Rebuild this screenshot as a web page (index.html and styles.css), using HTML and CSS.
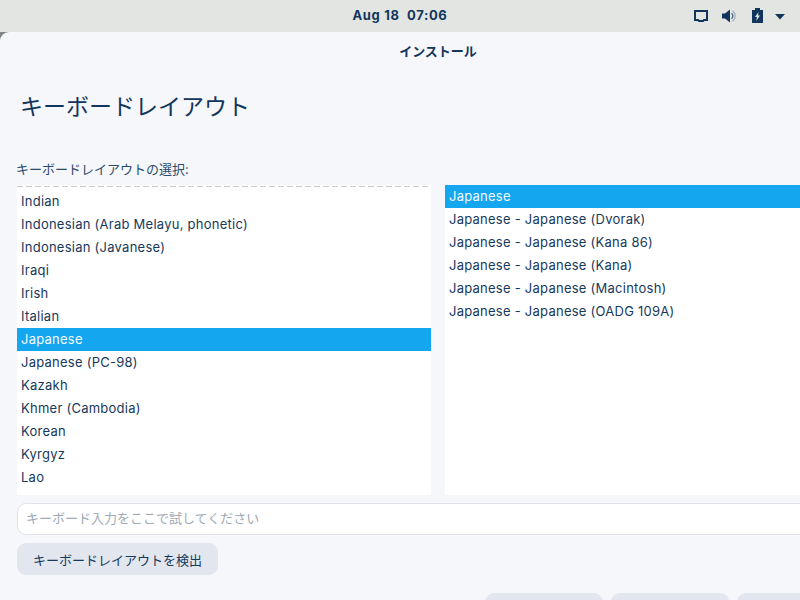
FILE: index.html
```html
<!DOCTYPE html>
<html lang="ja">
<head>
<meta charset="utf-8">
<title>インストール</title>
<link rel="stylesheet" href="styles.css">
</head>
<body>
<header class="topbar">
  <div></div>
  <div class="clock">Aug 18&nbsp;&nbsp;07:06</div>
  <div class="tray">
    <svg class="ic" width="16" height="16" viewBox="0 0 16 16"><path fill="none" stroke="#12355b" stroke-width="2" d="M2 3h12v9h-3l-1 1H6l-1-1H2z"/></svg>
    <svg class="ic" width="16" height="16" viewBox="0 0 16 16"><path fill="#12355b" d="M1 5.500h3L9 1.500v13l-5-4H1z"/><path fill="none" stroke="#12355b" stroke-width="1.300" stroke-opacity=".75" d="M10.500 5.200a3.600 3.600 0 0 1 0 5.600"/><path fill="none" stroke="#12355b" stroke-opacity=".3" stroke-width="1.300" d="M11.500 2.800a6.400 6.400 0 0 1 0 10.400"/></svg>
    <svg class="ic" width="16" height="16" viewBox="0 0 16 16"><path fill="#12355b" fill-rule="evenodd" d="M5 0h5v2h3v13H2V2h3zM8.500 4 5 9h2l-.8 4L10 7.500H8z"/></svg>
    <svg class="caret" width="12" height="6" viewBox="0 0 12 6"><path fill="#12355b" d="M1 0h10L6 5.500z"/></svg>
  </div>
</header>
<main class="window">
  <div class="wintitle">インストール</div>
  <h1 class="heading">キーボードレイアウト</h1>
  <div class="label">キーボードレイアウトの選択:</div>
  <div class="lists">
    <ul class="list list-left">
      <li>Indian</li>
      <li>Indonesian (Arab Melayu, phonetic)</li>
      <li>Indonesian (Javanese)</li>
      <li>Iraqi</li>
      <li>Irish</li>
      <li>Italian</li>
      <li class="sel">Japanese</li>
      <li>Japanese (PC-98)</li>
      <li>Kazakh</li>
      <li>Khmer (Cambodia)</li>
      <li>Korean</li>
      <li>Kyrgyz</li>
      <li>Lao</li>
    </ul>
    <ul class="list list-right">
      <li class="sel">Japanese</li>
      <li>Japanese - Japanese (Dvorak)</li>
      <li>Japanese - Japanese (Kana 86)</li>
      <li>Japanese - Japanese (Kana)</li>
      <li>Japanese - Japanese (Macintosh)</li>
      <li>Japanese - Japanese (OADG 109A)</li>
    </ul>
  </div>
  <div class="testbox">キーボード入力をここで試してください</div>
  <button class="btn detect">キーボードレイアウトを検出</button>
  <div class="nav">
    <span class="navbtn"></span>
    <span class="navbtn"></span>
    <span class="navbtn"></span>
  </div>
</main>
</body>
</html>
```
FILE: styles.css
```css
* { box-sizing: border-box; }
html, body {
  margin: 0;
  width: 800px;
  height: 600px;
  overflow: hidden;
  background: #7f8783;
  font-family: Inter, "Noto Sans CJK JP", sans-serif;
  color: #17395c;
}
.topbar {
  height: 32px;
  background: #e2e5e1;
  display: grid;
  grid-template-columns: 1fr auto 1fr;
  align-items: center;
}
.clock {
  font-size: 13px;
  font-weight: 700;
  letter-spacing: .65px;
  color: #12355b;
  margin-top: -2px;
}
.tray {
  justify-self: end;
  padding-right: 14px;
  display: flex;
  align-items: center;
  gap: 12px;
}
.ic { display: block; }
.ic + .ic + .ic { margin-left: 1px; }
.caret { display: block; margin: 1px 0 0 -4px; }
.window {
  width: 800px;
  height: 568px;
  overflow: hidden;
  background: #f5f7fb;
  border-top-left-radius: 9px;
  padding: 0 0 0 17px;
  display: flex;
  flex-direction: column;
  align-items: flex-start;
}
.window > * { flex-shrink: 0; }
.wintitle {
  width: 842px;
  height: 38px;
  line-height: 38px;
  text-align: center;
  font-size: 13px;
  font-weight: 700;
  color: #12355b;
}
.heading {
  margin: 17px 0 0 3px;
  height: 40px;
  line-height: 40px;
  font-size: 23px;
  font-weight: 400;
  color: #12355b;
}
.label {
  margin: 32px 0 0 -1px;
  height: 20px;
  line-height: 20px;
  font-size: 13px;
  color: #2a4a6b;
}
.lists {
  margin-top: 6px;
  display: flex;
  gap: 14px;
  height: 310px;
}
.list {
  margin: 0;
  padding: 0;
  list-style: none;
  background: #fff;
  font-size: 13px;
  letter-spacing: .25px;
  color: #17395c;
  height: 310px;
}
.list-left {
  width: 414px;
  padding-top: 5px;
  background-image: repeating-linear-gradient(90deg, #c9cccd 0 6px, transparent 6px 9px);
  background-size: 100% 1px;
  background-position: 0 1px;
  background-repeat: no-repeat;
}
.list-right { width: 420px; }
.list li {
  height: 23px;
  line-height: 23px;
  padding-left: 4px;
}
.list li.sel {
  background: #14a7f0;
  color: #f2f9ff;
}
.testbox {
  margin-top: 8px;
  width: 820px;
  height: 32px;
  line-height: 29px;
  padding-left: 8px;
  background: #fff;
  border: 1px solid #e0e3eb;
  border-radius: 9px;
  font-size: 13px;
  color: #a0a9b5;
}
.btn {
  margin-top: 8px;
  width: 201px;
  height: 32px;
  border: 0;
  border-radius: 9px;
  background: #e2e6ee;
  font-family: inherit;
  font-size: 13px;
  color: #17395c;
  padding: 0;
}
.nav {
  margin: 18px 0 0 468px;
  display: flex;
  gap: 8px;
}
.navbtn {
  display: block;
  width: 118px;
  height: 32px;
  border-radius: 9px;
  background: #e2e6ee;
}
```
